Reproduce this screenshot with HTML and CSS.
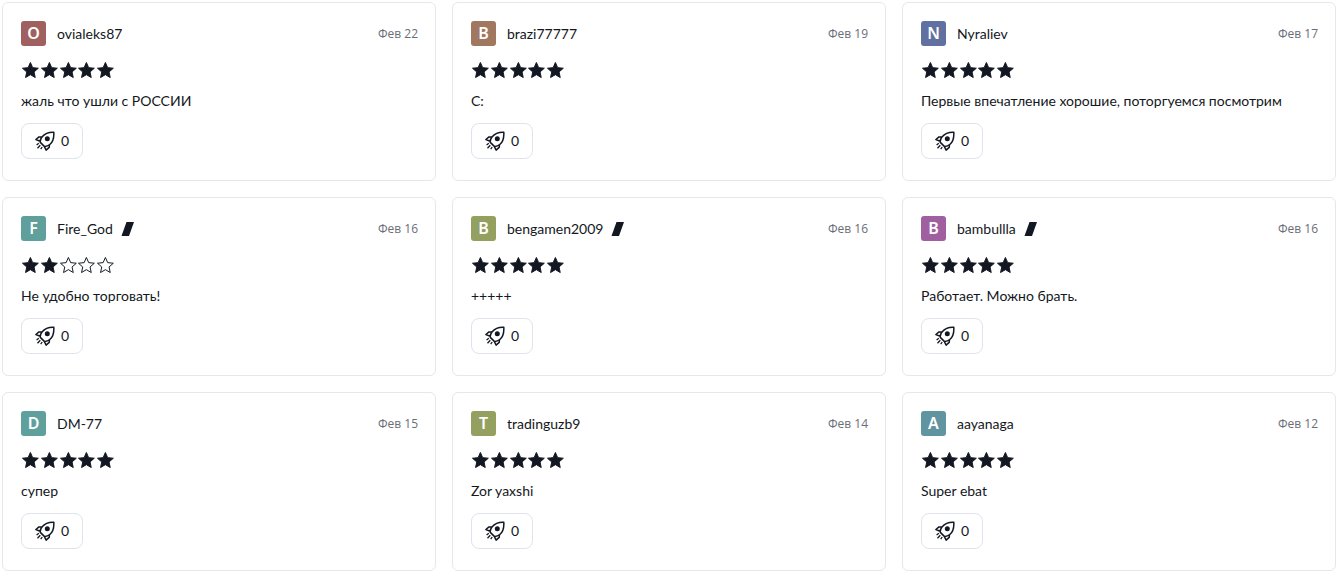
FILE: index.html
```
<!DOCTYPE html>
<html lang="ru">
<head>
    <meta charset="UTF-8">
    <meta name="viewport" content="width=device-width, initial-scale=1.0">
    <title>Отзывы</title>
    <link rel="stylesheet" href="styles.css">
</head>
<body>
    <svg class="sprite" aria-hidden="true">
        <symbol id="star" viewBox="0 0 19 18">
            <path d="M9.5 1.4l2.3 5.200 5.700.6-4.300 3.800 1.200 5.600-4.900-2.900-4.900 2.900 1.200-5.600L1.500 7.200l5.700-.6z"/>
        </symbol>
        <symbol id="rocket" viewBox="0 0 20 20">
            <path fill="none" stroke="#131722" stroke-width="1.500" stroke-linejoin="round" d="M18.800 1.200c-5-.2-9.200 1.500-11.600 4.500-1.700 2-2.200 4-1.900 5.700l4 4c1.700.2 3.700-.4 5.500-1.900 3-2.500 4.300-7.300 4-12.300zM7.200 5.700L4 5.900.9 8.500l4.400 1.900M14.600 13.500l-.4 2.900-3.100 2.700-1.800-3.700"/>
            <circle cx="12.300" cy="7.800" r="2.500" fill="#131722"/>
            <path fill="none" stroke="#131722" stroke-width="1.300" d="M3.800 12.200L1.600 14M5.300 14.300l-2.800 3M7.200 16l-1.500 2.200"/>
        </symbol>
        <symbol id="pro" viewBox="0 0 14 14">
            <path fill="#131722" d="M5.500 0H13L8 14H.500z"/>
        </symbol>
    </svg>

    <main class="reviews">
        <article class="review">
            <header class="review-header">
                <span class="avatar red">O</span>
                <a class="author" href="#">ovialeks87</a>
                <time class="date">Фев 22</time>
            </header>
            <div class="rating" role="img" aria-label="5 из 5">
                <svg class="star"><use href="#star"/></svg>
                <svg class="star"><use href="#star"/></svg>
                <svg class="star"><use href="#star"/></svg>
                <svg class="star"><use href="#star"/></svg>
                <svg class="star"><use href="#star"/></svg>
            </div>
            <p class="text">жаль что ушли с РОССИИ</p>
            <button class="boost" type="button"><svg class="rocket"><use href="#rocket"/></svg>0</button>
        </article>

        <article class="review">
            <header class="review-header">
                <span class="avatar brown">B</span>
                <a class="author" href="#">brazi77777</a>
                <time class="date">Фев 19</time>
            </header>
            <div class="rating" role="img" aria-label="5 из 5">
                <svg class="star"><use href="#star"/></svg>
                <svg class="star"><use href="#star"/></svg>
                <svg class="star"><use href="#star"/></svg>
                <svg class="star"><use href="#star"/></svg>
                <svg class="star"><use href="#star"/></svg>
            </div>
            <p class="text">С:</p>
            <button class="boost" type="button"><svg class="rocket"><use href="#rocket"/></svg>0</button>
        </article>

        <article class="review">
            <header class="review-header">
                <span class="avatar blue">N</span>
                <a class="author" href="#">Nyraliev</a>
                <time class="date">Фев 17</time>
            </header>
            <div class="rating" role="img" aria-label="5 из 5">
                <svg class="star"><use href="#star"/></svg>
                <svg class="star"><use href="#star"/></svg>
                <svg class="star"><use href="#star"/></svg>
                <svg class="star"><use href="#star"/></svg>
                <svg class="star"><use href="#star"/></svg>
            </div>
            <p class="text">Первые впечатление хорошие, поторгуемся посмотрим</p>
            <button class="boost" type="button"><svg class="rocket"><use href="#rocket"/></svg>0</button>
        </article>

        <article class="review">
            <header class="review-header">
                <span class="avatar teal">F</span>
                <a class="author" href="#">Fire_God</a>
                <svg class="pro"><use href="#pro"/></svg>
                <time class="date">Фев 16</time>
            </header>
            <div class="rating" role="img" aria-label="2 из 5">
                <svg class="star"><use href="#star"/></svg>
                <svg class="star"><use href="#star"/></svg>
                <svg class="star empty"><use href="#star"/></svg>
                <svg class="star empty"><use href="#star"/></svg>
                <svg class="star empty"><use href="#star"/></svg>
            </div>
            <p class="text">Не удобно торговать!</p>
            <button class="boost" type="button"><svg class="rocket"><use href="#rocket"/></svg>0</button>
        </article>

        <article class="review">
            <header class="review-header">
                <span class="avatar olive">B</span>
                <a class="author" href="#">bengamen2009</a>
                <svg class="pro"><use href="#pro"/></svg>
                <time class="date">Фев 16</time>
            </header>
            <div class="rating" role="img" aria-label="5 из 5">
                <svg class="star"><use href="#star"/></svg>
                <svg class="star"><use href="#star"/></svg>
                <svg class="star"><use href="#star"/></svg>
                <svg class="star"><use href="#star"/></svg>
                <svg class="star"><use href="#star"/></svg>
            </div>
            <p class="text">+++++</p>
            <button class="boost" type="button"><svg class="rocket"><use href="#rocket"/></svg>0</button>
        </article>

        <article class="review">
            <header class="review-header">
                <span class="avatar purple">B</span>
                <a class="author" href="#">bambullla</a>
                <svg class="pro"><use href="#pro"/></svg>
                <time class="date">Фев 16</time>
            </header>
            <div class="rating" role="img" aria-label="5 из 5">
                <svg class="star"><use href="#star"/></svg>
                <svg class="star"><use href="#star"/></svg>
                <svg class="star"><use href="#star"/></svg>
                <svg class="star"><use href="#star"/></svg>
                <svg class="star"><use href="#star"/></svg>
            </div>
            <p class="text">Работает. Можно брать.</p>
            <button class="boost" type="button"><svg class="rocket"><use href="#rocket"/></svg>0</button>
        </article>

        <article class="review">
            <header class="review-header">
                <span class="avatar teal">D</span>
                <a class="author" href="#">DM-77</a>
                <time class="date">Фев 15</time>
            </header>
            <div class="rating" role="img" aria-label="5 из 5">
                <svg class="star"><use href="#star"/></svg>
                <svg class="star"><use href="#star"/></svg>
                <svg class="star"><use href="#star"/></svg>
                <svg class="star"><use href="#star"/></svg>
                <svg class="star"><use href="#star"/></svg>
            </div>
            <p class="text">супер</p>
            <button class="boost" type="button"><svg class="rocket"><use href="#rocket"/></svg>0</button>
        </article>

        <article class="review">
            <header class="review-header">
                <span class="avatar olive">T</span>
                <a class="author" href="#">tradinguzb9</a>
                <time class="date">Фев 14</time>
            </header>
            <div class="rating" role="img" aria-label="5 из 5">
                <svg class="star"><use href="#star"/></svg>
                <svg class="star"><use href="#star"/></svg>
                <svg class="star"><use href="#star"/></svg>
                <svg class="star"><use href="#star"/></svg>
                <svg class="star"><use href="#star"/></svg>
            </div>
            <p class="text">Zor yaxshi</p>
            <button class="boost" type="button"><svg class="rocket"><use href="#rocket"/></svg>0</button>
        </article>

        <article class="review">
            <header class="review-header">
                <span class="avatar cyan">A</span>
                <a class="author" href="#">aayanaga</a>
                <time class="date">Фев 12</time>
            </header>
            <div class="rating" role="img" aria-label="5 из 5">
                <svg class="star"><use href="#star"/></svg>
                <svg class="star"><use href="#star"/></svg>
                <svg class="star"><use href="#star"/></svg>
                <svg class="star"><use href="#star"/></svg>
                <svg class="star"><use href="#star"/></svg>
            </div>
            <p class="text">Super ebat</p>
            <button class="boost" type="button"><svg class="rocket"><use href="#rocket"/></svg>0</button>
        </article>
    </main>
</body>
</html>
```
FILE: styles.css
```
* {
    box-sizing: border-box;
}
body {
    margin: 0;
    background: #fff;
    color: #131722;
    font-family: "Trebuchet MS", Lato, sans-serif;
    font-size: 14px;
    line-height: 20px;
}
.sprite {
    display: none;
}
.reviews {
    display: grid;
    grid-template-columns: repeat(3, 1fr);
    gap: 16px;
    padding: 2px 1px 8px 2px;
}
.review {
    border: 1px solid #e6e7ea;
    border-radius: 6px;
    padding: 18px 17px 21px 18px;
}
.review-header {
    display: flex;
    align-items: center;
}
.avatar {
    width: 25px;
    height: 25px;
    margin-right: 11px;
    border-radius: 3px;
    color: #fff;
    font-family: "Trebuchet MS", "Noto Sans", sans-serif;
    font-size: 16px;
    font-weight: 600;
    line-height: 25px;
    text-align: center;
}
.red { background: #a06060; }
.brown { background: #a07860; }
.blue { background: #6070a0; }
.teal { background: #60a09c; }
.olive { background: #94a060; }
.purple { background: #a060a0; }
.cyan { background: #6094a0; }
.author {
    color: inherit;
    text-decoration: none;
}
.pro {
    width: 14px;
    height: 14px;
    margin-left: 8px;
}
.date {
    margin-left: auto;
    color: #6a6d78;
    font-family: "Trebuchet MS", "Open Sans", sans-serif;
    font-size: 12px;
}
.rating {
    display: flex;
    width: 94px;
    margin-top: 15px;
}
.star {
    flex: 1;
    min-width: 0;
    height: 18px;
    fill: #131722;
    stroke: #131722;
}
.star.empty {
    fill: none;
}
.text {
    margin: 12px 0;
}
.boost {
    display: flex;
    align-items: center;
    justify-content: center;
    gap: 6px;
    width: 62px;
    height: 36px;
    padding: 0;
    border: 1px solid #e0e3eb;
    border-radius: 8px;
    background: #fff;
    color: inherit;
    font: inherit;
}
.rocket {
    width: 20px;
    height: 20px;
}
```
